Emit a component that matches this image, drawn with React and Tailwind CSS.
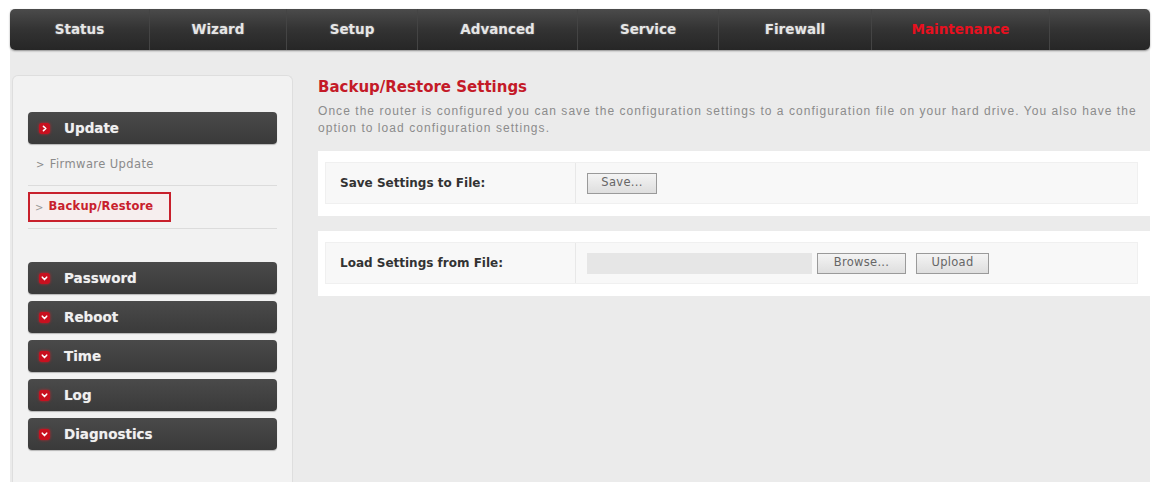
import React from "react";

const tabs = [
  { label: "Status", w: "w-[140px]" },
  { label: "Wizard", w: "w-[137px]" },
  { label: "Setup", w: "w-[131px]" },
  { label: "Advanced", w: "w-[160px]" },
  { label: "Service", w: "w-[141px]" },
  { label: "Firewall", w: "w-[153px]" },
  { label: "Maintenance", w: "w-[178px]", active: true },
];

function Bullet({ open }) {
  return (
    <span className="flex h-[11px] w-[11px] items-center justify-center rounded-[3px] bg-[#c8101f] shadow-[0_0_3px_rgba(220,30,40,0.8)]">
      <svg width="7" height="7" viewBox="0 0 8 8">
        {open ? (
          <path d="M1.5 2.5 L4 5.2 L6.5 2.5" stroke="#fff" strokeWidth="1.8" fill="none" strokeLinecap="round" strokeLinejoin="round" />
        ) : (
          <path d="M2.8 1.5 L5.5 4 L2.8 6.5" stroke="#fff" strokeWidth="1.8" fill="none" strokeLinecap="round" strokeLinejoin="round" />
        )}
      </svg>
    </span>
  );
}

function SideButton({ label, open }) {
  return (
    <div className="flex h-[32px] items-center gap-[14px] rounded-[4px] bg-gradient-to-b from-[#4a4a4a] to-[#3a3a3a] pl-[11px] shadow-[0_1px_1px_rgba(0,0,0,0.25)]">
      <Bullet open={open} />
      <span className="font-['DejaVu_Sans',Verdana,sans-serif] text-[13.5px] font-bold text-[#f0f0f0] [text-shadow:0_0_1px_rgba(255,255,255,0.4)]">
        {label}
      </span>
    </div>
  );
}

function FormButton({ children, className = "" }) {
  return (
    <button
      className={`h-[21px] border border-[#9a9a9a] bg-gradient-to-b from-[#f4f4f4] to-[#dedede] font-['DejaVu_Sans',Verdana,sans-serif] text-[11.5px] tracking-[0.3px] text-[#666] ${className}`}
    >
      {children}
    </button>
  );
}

function SettingRow({ label, children }) {
  return (
    <div className="bg-white pb-[12px] pl-[7px] pr-[12px] pt-[11px]">
      <div className="flex h-[42px] items-stretch border border-[#f0f0f0] bg-[#f8f8f8]">
        <div className="flex w-[250px] items-center border-r border-[#e8e8e8] pl-[14px] font-['DejaVu_Sans',Verdana,sans-serif] text-[12px] font-bold text-[#333]">
          {label}
        </div>
        <div className="flex flex-1 items-center pl-[11px]">{children}</div>
      </div>
    </div>
  );
}

export default function App() {
  return (
    <div className="h-[487px] w-[1156px] bg-white pl-[10px] pt-[9px] font-['Liberation_Sans',Arial,sans-serif]">
      <div className="flex h-[473px] w-[1140px] flex-col bg-[#ebebeb]">
        {/* top navigation */}
        <div className="flex h-[41px] shrink-0 rounded-[5px] bg-gradient-to-b from-[#4b4b4b] via-[#333] to-[#262626] shadow-[0_1px_2px_rgba(0,0,0,0.4)]">
          {tabs.map((t) => (
            <div
              key={t.label}
              className={`${t.w} flex items-center justify-center border-r border-[#444] font-['DejaVu_Sans',Verdana,sans-serif] text-[13.5px] font-bold ${
                t.active ? "text-[#e8101f]" : "text-[#e6e6e6] [text-shadow:0_0_2px_rgba(255,255,255,0.35)]"
              }`}
            >
              {t.label}
            </div>
          ))}
        </div>

        <div className="flex flex-1 pl-[2px] pt-[25px]">
          {/* side menu */}
          <div className="w-[281px] rounded-t-[6px] border border-b-0 border-[#dedede] bg-[#f2f2f2] px-[15px] pt-[36px]">
            <SideButton label="Update" />
            <div className="flex h-[42px] items-center border-b border-[#dcdcdc] pl-[8px] font-['DejaVu_Sans',Verdana,sans-serif] text-[11.5px] tracking-[0.4px] text-[#8a8a8a]">
              <span className="mr-[5px] text-[10px]">&gt;</span>Firmware Update
            </div>
            <div className="border-b border-[#dcdcdc] pb-[6px] pt-[6px]">
              <div className="flex h-[30px] w-[143px] items-center border-2 border-[#c8202c] bg-[#f6eeee] pl-[5px] font-['DejaVu_Sans',Verdana,sans-serif] text-[11.5px] font-bold tracking-[0.2px] text-[#c8202c]">
                <span className="mr-[5px] text-[10px] font-normal text-[#999]">&gt;</span>Backup/Restore
              </div>
            </div>
            <div className="mt-[33px] flex flex-col gap-[7px]">
              <SideButton label="Password" open />
              <SideButton label="Reboot" open />
              <SideButton label="Time" open />
              <SideButton label="Log" open />
              <SideButton label="Diagnostics" open />
            </div>
          </div>

          {/* main panel */}
          <div className="ml-[25px] flex-1 pt-[2px]">
            <h1 className="font-['DejaVu_Sans',Verdana,sans-serif] text-[15px] font-bold leading-[20px] text-[#c41a28]">
              Backup/Restore Settings
            </h1>
            <p className="mt-[6px] pr-[10px] text-[12px] leading-[17px] tracking-[1.05px] text-[#8c8c8c]">
              Once the router is configured you can save the configuration settings to a configuration file on your
              hard drive. You also have the option to load configuration settings.
            </p>

            <div className="mt-[14px] flex flex-col gap-[15px]">
              <SettingRow label="Save Settings to File:">
                <FormButton className="w-[70px]">Save...</FormButton>
              </SettingRow>
              <SettingRow label="Load Settings from File:">
                <div className="h-[21px] w-[225px] bg-[#e6e6e6]" />
                <FormButton className="ml-[5px] w-[89px]">Browse...</FormButton>
                <FormButton className="ml-[10px] w-[73px]">Upload</FormButton>
              </SettingRow>
            </div>
          </div>
        </div>
      </div>
    </div>
  );
}
